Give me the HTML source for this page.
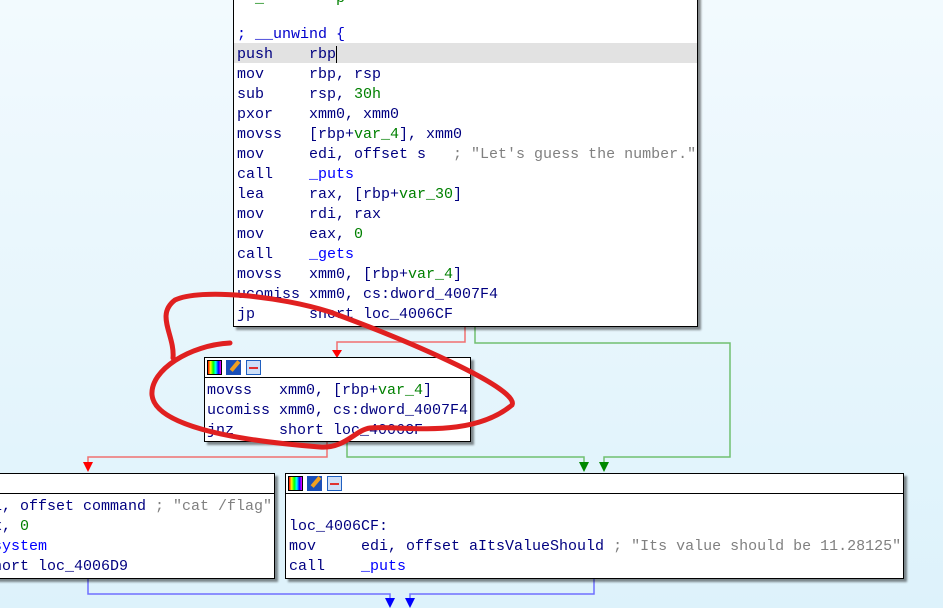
<!DOCTYPE html>
<html><head><style>
body{margin:0;width:943px;height:608px;overflow:hidden;background:linear-gradient(#f2fafe,#ddf2fb);position:relative;font-family:"Liberation Mono",monospace;font-size:15px;}
.b{position:absolute;background:#fff;border:1px solid #000;box-shadow:3px 3px 2px rgba(0,0,0,.45);}
.l{position:absolute;white-space:pre;color:#000080;line-height:20px;height:20px;margin-top:1px;}
.g{color:#008000}.c{color:#808080}.n{color:#0000ff}
.hd{position:absolute;left:0;right:0;top:0;height:19px;border-bottom:1px solid #000;}
.ic{position:absolute;top:2px;width:15px;height:15px;}
</style></head><body>
<svg width="943" height="608" style="position:absolute;left:0;top:0">
<g fill="none" stroke-width="1.5">
<path d="M465 326V342H337V352" stroke="#f07070"/>
<path d="M475 326V343H730V457H604V463" stroke="#70c070"/>
<path d="M327 441V457H88V463" stroke="#f07070"/>
<path d="M347 441V457H584V463" stroke="#70c070"/>
<path d="M88 578V594H390V600" stroke="#7070ff"/>
<path d="M594 578V594H410V600" stroke="#7070ff"/>
</g>
<path d="M332 350h10l-5 8z" fill="#f00"/>
<path d="M83 462h10l-5 10z" fill="#f00"/>
<path d="M579 462h10l-5 10z" fill="#080"/>
<path d="M599 462h10l-5 10z" fill="#080"/>
<path d="M385 598h10l-5 10z" fill="#00f"/>
<path d="M405 598h10l-5 10z" fill="#00f"/>
</svg>
<div class="b" style="left:233px;top:-5px;width:463px;height:330px">
<div style="position:absolute;left:0;right:0;top:47px;height:20px;background:#e2e2e2"></div>
<div class="l" style="left:3px;top:-8px"><span class="g">  _        p</span></div>
<div class="l" style="left:3px;top:28px;color:#0000cc">; __unwind {</div>
<div class="l" style="left:3px;top:48px">push    rbp<span style="border-left:1.5px solid #000"></span></div>
<div class="l" style="left:3px;top:68px">mov     rbp, rsp</div>
<div class="l" style="left:3px;top:88px">sub     rsp, <span class="g">30h</span></div>
<div class="l" style="left:3px;top:108px">pxor    xmm0, xmm0</div>
<div class="l" style="left:3px;top:128px">movss   [rbp+<span class="g">var_4</span>], xmm0</div>
<div class="l" style="left:3px;top:148px">mov     edi, offset s   <span class="c">; "Let's guess the number."</span></div>
<div class="l" style="left:3px;top:168px">call    <span class="n">_puts</span></div>
<div class="l" style="left:3px;top:188px">lea     rax, [rbp+<span class="g">var_30</span>]</div>
<div class="l" style="left:3px;top:208px">mov     rdi, rax</div>
<div class="l" style="left:3px;top:228px">mov     eax, <span class="g">0</span></div>
<div class="l" style="left:3px;top:248px">call    <span class="n">_gets</span></div>
<div class="l" style="left:3px;top:268px">movss   xmm0, [rbp+<span class="g">var_4</span>]</div>
<div class="l" style="left:3px;top:288px">ucomiss xmm0, cs:dword_4007F4</div>
<div class="l" style="left:3px;top:308px">jp      short loc_4006CF</div>
</div>
<div class="b" style="left:204px;top:357px;width:265px;height:83px">
<div class="hd"><div class="ic" style="left:2px;background:linear-gradient(90deg,#f00,#ff0,#0f0,#0ff,#00f,#f0f);border:1px solid #000;width:13px;height:13px"></div><div class="ic" style="left:21px;background:#1a4fb8"><div style="width:4px;height:12px;background:#f0a020;transform:rotate(40deg);margin-left:7px"></div></div><div class="ic" style="left:41px;background:#cfe0f8;border:1px solid #2060c0;width:13px;height:13px"><div style="margin:6px 2px;height:2px;background:#e03030"></div></div></div>
<div class="l" style="left:2px;top:22px">movss   xmm0, [rbp+<span class="g">var_4</span>]</div>
<div class="l" style="left:2px;top:42px">ucomiss xmm0, cs:dword_4007F4</div>
<div class="l" style="left:2px;top:62px">jnz     short loc_4006CF</div>
</div>
<div class="b" style="left:-5px;top:473px;width:278px;height:104px">
<div class="hd"></div>
<div class="l" style="left:-3px;top:22px">i, offset command <span class="c">; "cat /flag"</span></div>
<div class="l" style="left:-3px;top:42px">x, <span class="g">0</span></div>
<div class="l" style="left:-3px;top:62px"><span class="n">system</span></div>
<div class="l" style="left:-3px;top:82px">hort loc_4006D9</div>
</div>
<div class="b" style="left:285px;top:473px;width:617px;height:104px">
<div class="hd"><div class="ic" style="left:2px;background:linear-gradient(90deg,#f00,#ff0,#0f0,#0ff,#00f,#f0f);border:1px solid #000;width:13px;height:13px"></div><div class="ic" style="left:21px;background:#1a4fb8"><div style="width:4px;height:12px;background:#f0a020;transform:rotate(40deg);margin-left:7px"></div></div><div class="ic" style="left:41px;background:#cfe0f8;border:1px solid #2060c0;width:13px;height:13px"><div style="margin:6px 2px;height:2px;background:#e03030"></div></div></div>
<div class="l" style="left:3px;top:42px">loc_4006CF:</div>
<div class="l" style="left:3px;top:62px">mov     edi, offset aItsValueShould <span class="c">; "Its value should be 11.28125"</span></div>
<div class="l" style="left:3px;top:82px">call    <span class="n">_puts</span></div>
</div>
<svg width="943" height="608" style="position:absolute;left:0;top:0">
<path d="M230 343C190 345 150 370 152 395C155 425 230 440 320 447C345 449 355 430 370 428C400 425 470 440 512 405C520 390 420 345 330 312C280 296 200 288 175 300C155 315 175 335 173 358" fill="none" stroke="#e02020" stroke-width="5" stroke-linecap="round"/>
</svg>
</body></html>
